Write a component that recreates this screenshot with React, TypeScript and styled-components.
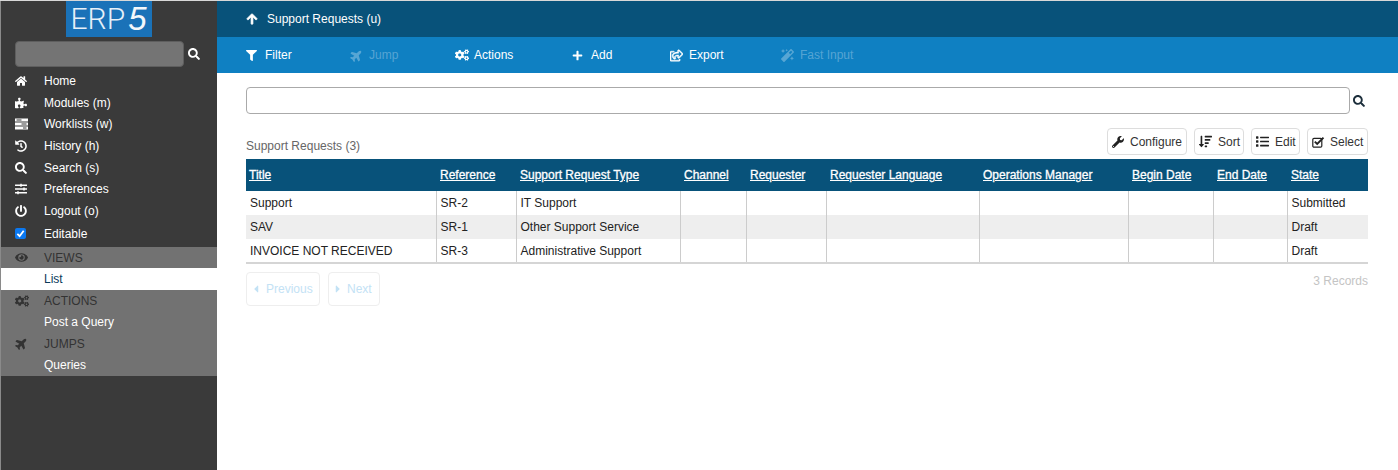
import React from 'react';
import styled, { createGlobalStyle } from 'styled-components';
import {
  FaHome, FaPuzzlePiece, FaHistory, FaSearch, FaSlidersH, FaPowerOff, FaEye, FaCogs, FaPlane,
  FaArrowUp, FaFilter, FaPlus, FaRegShareSquare, FaMagic, FaWrench, FaSortAmountDown, FaList,
  FaCaretLeft, FaCaretRight,
} from 'react-icons/fa';

const Global = createGlobalStyle`
  html, body { margin: 0; padding: 0; height: 100%; background: #fff; }
  body { font-family: "Liberation Sans", Arial, sans-serif; font-size: 12px; color: #222; }
  #root { height: 100%; }
  * { box-sizing: border-box; }
`;

const Page = styled.div`
  display: grid;
  grid-template-columns: 217px 1fr;
  width: 1398px;
  height: 470px;
  border-top: 1px solid #d8d8d8;
  overflow: hidden;
`;

const Sidebar = styled.aside`
  background: #3a3a3a;
  border-left: 1px solid #8a8a8a;
  display: flex;
  flex-direction: column;
`;

const LogoWrap = styled.div`
  display: flex;
  justify-content: center;
  padding-right: 1px;
`;

const Logo = styled.div`
  width: 86px;
  height: 36px;
  background: #1a72b8;
  color: #e6f0f8;
  display: flex;
  align-items: center;
  justify-content: center;
  font-family: Roboto, sans-serif;
  font-weight: 300;
  font-size: 30px;
  line-height: 36px;
`;

const LogoFive = styled.span`
  font-family: "Liberation Sans", sans-serif;
  font-style: italic;
  font-weight: 400;
  font-size: 33px;
  line-height: 36px;
  margin-left: 3px;
  color: #f2f7fb;
`;

const SideSearch = styled.div`
  display: flex;
  align-items: center;
  margin: 4px 0 0 14px;
  height: 26px;
  color: #fff;
`;

const SideInput = styled.div`
  width: 169px;
  height: 26px;
  background: #747474;
  border: 1px solid #5e5e5e;
  border-radius: 4px;
  margin-right: 4px;
`;

const SideList = styled.nav`
  display: flex;
  flex-direction: column;
  margin-top: 3.4px;
`;

const SideItem = styled.div<{ $tall?: boolean }>`
  display: flex;
  align-items: center;
  height: ${p => (p.$tall ? '23.5px' : '21.6px')};
  padding-top: ${p => (p.$tall ? '1px' : '0')};
  color: #fff;
  font-size: 12px;
`;

const SideIcon = styled.span`
  width: 43px;
  padding-left: 14px;
  display: flex;
  align-items: center;
  font-size: 12px;
  color: inherit;
`;

const PlaneIcon = styled(FaPlane)`
  transform: rotate(-45deg);
`;

const Check = styled.span`
  width: 11px;
  height: 11px;
  border-radius: 2px;
  background: #0b78f0;
  display: flex;
  align-items: center;
  justify-content: center;
`;

const Panel = styled.div`
  display: flex;
  flex-direction: column;
  margin-top: 1.8px;
  background: #727272;
`;

const PanelHead = styled.div`
  display: flex;
  align-items: center;
  height: 21.5px;
  color: #333;
  font-size: 12px;
`;

const PanelItem = styled.div<{ $active?: boolean }>`
  height: 21.5px;
  padding-left: 43px;
  display: flex;
  align-items: center;
  background: ${p => (p.$active ? '#fff' : 'transparent')};
  color: ${p => (p.$active ? '#0b3a5a' : '#fff')};
  font-size: 12px;
`;

const Main = styled.main`
  display: flex;
  flex-direction: column;
  min-width: 0;
`;

const Header = styled.header`
  height: 36px;
  background: #08527a;
  color: #fff;
  display: flex;
  align-items: center;
  padding-left: 29px;
  font-size: 12px;
`;

const HeaderIcon = styled.span`
  display: flex;
  width: 21px;
  font-size: 12px;
  svg { stroke: currentColor; stroke-width: 30px; }
`;

const Toolbar = styled.div`
  height: 36px;
  background: #0f80c2;
  display: flex;
  align-items: center;
  padding-left: 29px;
`;

const Tool = styled.div<{ $w: number; $off?: boolean }>`
  width: ${p => p.$w}px;
  display: flex;
  align-items: center;
  font-size: 12px;
  color: ${p => (p.$off ? 'rgba(255,255,255,0.3)' : '#fff')};
`;

const ToolIcon = styled.span`
  width: 19px;
  display: flex;
  align-items: center;
`;

const ExportIcon = styled(FaRegShareSquare)`
  stroke: currentColor;
  stroke-width: 20px;
`;

const Content = styled.div`
  padding: 14px 30px 0 29px;
  display: flex;
  flex-direction: column;
`;

const SearchRow = styled.div`
  display: flex;
  align-items: center;
  height: 27px;
  color: #1d2f3c;
`;

const SearchBox = styled.div`
  width: 1104px;
  height: 27px;
  border: 1px solid #aaa;
  border-radius: 4px;
`;

const SearchIcon = styled.span`
  display: flex;
  margin-left: 3px;
  font-size: 12px;
`;

const ListHead = styled.div`
  display: flex;
  align-items: flex-end;
  justify-content: space-between;
  margin-top: 14px;
  height: 27px;
`;

const ListTitle = styled.div`
  color: #666;
  font-size: 12px;
  line-height: 14px;
  padding-bottom: 2px;
`;

const Buttons = styled.div`
  display: flex;
  gap: 7px;
`;

const SmallButton = styled.div<{ $w: number; $gap: number }>`
  width: ${p => p.$w}px;
  height: 27px;
  border: 1px solid #ddd;
  border-radius: 4px;
  display: flex;
  align-items: center;
  padding-left: 4px;
  gap: ${p => p.$gap}px;
  color: #333;
  font-size: 12px;
  white-space: nowrap;
  svg { color: #222; flex: none; }
`;

const Table = styled.table`
  margin-top: 4px;
  width: 1122px;
  border-collapse: collapse;
  table-layout: fixed;
  font-size: 12px;
  border-bottom: 2px solid #d5d5d5;
`;

const Th = styled.th`
  height: 32px;
  background: #08527a;
  color: #fff;
  font-weight: 400;
  -webkit-text-stroke: 0.3px #fff;
  text-align: left;
  padding: 0 3px 0 4px;
  text-decoration: underline;
  white-space: nowrap;
  overflow: hidden;
  &:first-child { padding-left: 3px; }
`;

const Tr = styled.tr<{ $alt?: boolean }>`
  background: ${p => (p.$alt ? '#eeeeee' : '#fff')};
`;

const Td = styled.td`
  height: 24px;
  padding: 0 3px 0 4px;
  color: #222;
  border-left: 1px solid #ccc;
  white-space: nowrap;
  overflow: hidden;
  &:first-child { border-left: 0; }
`;

const Footer = styled.div`
  display: flex;
  justify-content: space-between;
  margin-top: 8px;
`;

const Pager = styled.div`
  display: flex;
  gap: 8px;
`;

const PageButton = styled.div<{ $w: number; $gap: number }>`
  width: ${p => p.$w}px;
  height: 34px;
  border: 1px solid #eee;
  border-radius: 4px;
  display: flex;
  align-items: center;
  padding-left: 3px;
  gap: ${p => p.$gap}px;
  color: #c3e2f5;
  font-size: 12px;
`;

const Records = styled.div`
  color: #c4c4c4;
  font-size: 12px;
  line-height: 14px;
  margin-top: 2px;
`;

const TasksIcon = () => (
  <svg width="13" height="12" viewBox="0 0 13 12" fill="currentColor">
    <path d="M0 0.5h13v3H0zM0 4.5h13v3H0zM0 8.5h13v3H0z" />
    <path d="M6.5 5.5h5v1h-5zM1.5 1.5h5v1h-5zM8 9.5h3.5v1H8z" fill="#3a3a3a" />
  </svg>
);

const CheckSquareIcon = () => (
  <svg width="13" height="12" viewBox="0 0 13 12" fill="none" stroke="currentColor">
    <rect x="0.8" y="2.3" width="9" height="8.9" rx="1.2" strokeWidth="1.2" />
    <path d="M2.8 5.6 5.2 8l6.3-6.3" strokeWidth="1.9" />
  </svg>
);

const nav = [
  { icon: <FaHome />, label: 'Home' },
  { icon: <FaPuzzlePiece />, label: 'Modules (m)' },
  { icon: <TasksIcon />, label: 'Worklists (w)' },
  { icon: <FaHistory />, label: 'History (h)' },
  { icon: <FaSearch />, label: 'Search (s)' },
  { icon: <FaSlidersH />, label: 'Preferences' },
  { icon: <FaPowerOff />, label: 'Logout (o)' },
];

const tools = [
  { icon: <FaFilter size={11} />, label: 'Filter', w: 104 },
  { icon: <PlaneIcon size={13} />, label: 'Jump', w: 105, off: true },
  { icon: <FaCogs size={14} />, label: 'Actions', w: 117 },
  { icon: <FaPlus size={11} />, label: 'Add', w: 98 },
  { icon: <ExportIcon size={13} />, label: 'Export', w: 111 },
  { icon: <FaMagic size={13} />, label: 'Fast Input', w: 100, off: true },
];

const cols: [string, number][] = [
  ['Title', 190], ['Reference', 80], ['Support Request Type', 164], ['Channel', 66], ['Requester', 80],
  ['Requester Language', 153], ['Operations Manager', 149], ['Begin Date', 85], ['End Date', 74], ['State', 81],
];

const rows = [
  ['Support', 'SR-2', 'IT Support', 'Submitted'],
  ['SAV', 'SR-1', 'Other Support Service', 'Draft'],
  ['INVOICE NOT RECEIVED', 'SR-3', 'Administrative Support', 'Draft'],
];

export default function App() {
  return (
    <>
      <Global />
      <Page>
        <Sidebar>
          <LogoWrap>
            <Logo>ERP<LogoFive>5</LogoFive></Logo>
          </LogoWrap>
          <SideSearch>
            <SideInput />
            <FaSearch size={12} />
          </SideSearch>
          <SideList>
            {nav.map(({ icon, label }) => (
              <SideItem key={label}>
                <SideIcon>{icon}</SideIcon>
                {label}
              </SideItem>
            ))}
            <SideItem $tall>
              <SideIcon>
                <Check>
                  <svg width="9" height="9" viewBox="0 0 10 10" fill="none" stroke="#fff" strokeWidth="2"><path d="M1.5 5.5 4 8l4.5-6" /></svg>
                </Check>
              </SideIcon>
              Editable
            </SideItem>
          </SideList>
          <Panel>
            <PanelHead><SideIcon><FaEye size={13} /></SideIcon>VIEWS</PanelHead>
            <PanelItem $active>List</PanelItem>
            <PanelHead><SideIcon><FaCogs size={14} /></SideIcon>ACTIONS</PanelHead>
            <PanelItem>Post a Query</PanelItem>
            <PanelHead><SideIcon><PlaneIcon size={13} /></SideIcon>JUMPS</PanelHead>
            <PanelItem>Queries</PanelItem>
          </Panel>
        </Sidebar>
        <Main>
          <Header>
            <HeaderIcon><FaArrowUp /></HeaderIcon>
            Support Requests (u)
          </Header>
          <Toolbar>
            {tools.map(({ icon, label, w, off }) => (
              <Tool key={label} $w={w} $off={off}><ToolIcon>{icon}</ToolIcon>{label}</Tool>
            ))}
          </Toolbar>
          <Content>
            <SearchRow>
              <SearchBox />
              <SearchIcon><FaSearch /></SearchIcon>
            </SearchRow>
            <ListHead>
              <ListTitle>Support Requests (3)</ListTitle>
              <Buttons>
                <SmallButton $w={80} $gap={6}><FaWrench size={12} />Configure</SmallButton>
                <SmallButton $w={50} $gap={6}><FaSortAmountDown size={13} />Sort</SmallButton>
                <SmallButton $w={49} $gap={6}><FaList size={13} />Edit</SmallButton>
                <SmallButton $w={61} $gap={5}><CheckSquareIcon />Select</SmallButton>
              </Buttons>
            </ListHead>
            <Table>
              <colgroup>
                {cols.map(([n, w]) => <col key={n} style={{ width: w }} />)}
              </colgroup>
              <thead>
                <tr>{cols.map(([n]) => <Th key={n}>{n}</Th>)}</tr>
              </thead>
              <tbody>
                {rows.map((r, i) => (
                  <Tr key={r[0]} $alt={i === 1}>
                    <Td>{r[0]}</Td>
                    <Td>{r[1]}</Td>
                    <Td>{r[2]}</Td>
                    <Td /><Td /><Td /><Td /><Td /><Td />
                    <Td>{r[3]}</Td>
                  </Tr>
                ))}
              </tbody>
            </Table>
            <Footer>
              <Pager>
                <PageButton $w={74} $gap={4}><FaCaretLeft size={12} />Previous</PageButton>
                <PageButton $w={52} $gap={3}><FaCaretRight size={12} />Next</PageButton>
              </Pager>
              <Records>3 Records</Records>
            </Footer>
          </Content>
        </Main>
      </Page>
    </>
  );
}
